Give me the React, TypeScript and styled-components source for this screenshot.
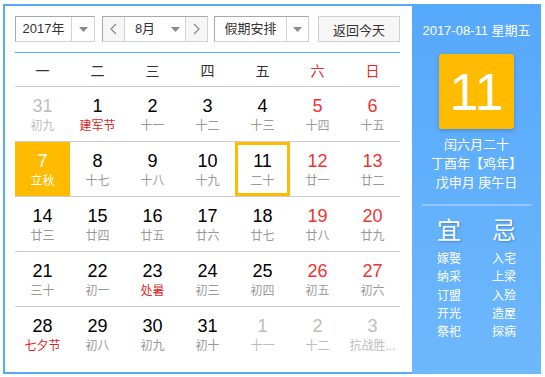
import React from "react";
import styled, { createGlobalStyle } from "styled-components";

type Day = {
  n: number;
  lunar: string;
  muted?: boolean;
  weekend?: boolean;
  festival?: boolean;
  selected?: boolean;
  today?: boolean;
};

const weekdays = ["一", "二", "三", "四", "五", "六", "日"];

const rows: Day[][] = [
  [
    { n: 31, lunar: "初九", muted: true },
    { n: 1, lunar: "建军节", festival: true },
    { n: 2, lunar: "十一" },
    { n: 3, lunar: "十二" },
    { n: 4, lunar: "十三" },
    { n: 5, lunar: "十四", weekend: true },
    { n: 6, lunar: "十五", weekend: true },
  ],
  [
    { n: 7, lunar: "立秋", selected: true },
    { n: 8, lunar: "十七" },
    { n: 9, lunar: "十八" },
    { n: 10, lunar: "十九" },
    { n: 11, lunar: "二十", today: true },
    { n: 12, lunar: "廿一", weekend: true },
    { n: 13, lunar: "廿二", weekend: true },
  ],
  [
    { n: 14, lunar: "廿三" },
    { n: 15, lunar: "廿四" },
    { n: 16, lunar: "廿五" },
    { n: 17, lunar: "廿六" },
    { n: 18, lunar: "廿七" },
    { n: 19, lunar: "廿八", weekend: true },
    { n: 20, lunar: "廿九", weekend: true },
  ],
  [
    { n: 21, lunar: "三十" },
    { n: 22, lunar: "初一" },
    { n: 23, lunar: "处暑", festival: true },
    { n: 24, lunar: "初三" },
    { n: 25, lunar: "初四" },
    { n: 26, lunar: "初五", weekend: true },
    { n: 27, lunar: "初六", weekend: true },
  ],
  [
    { n: 28, lunar: "七夕节", festival: true },
    { n: 29, lunar: "初八" },
    { n: 30, lunar: "初九" },
    { n: 31, lunar: "初十" },
    { n: 1, lunar: "十一", muted: true },
    { n: 2, lunar: "十二", muted: true },
    { n: 3, lunar: "抗战胜...", muted: true },
  ],
];

const yi = ["嫁娶", "纳采", "订盟", "开光", "祭祀"];
const ji = ["入宅", "上梁", "入殓", "造屋", "探病"];

const Caret = () => (
  <svg width="9" height="5" viewBox="0 0 9 5">
    <path d="M0 0 L9 0 L4.5 5 Z" fill="#8a8a8a" />
  </svg>
);

const Chevron = ({ dir }: { dir: "left" | "right" }) => (
  <svg width="7" height="12" viewBox="0 0 7 12">
    <polyline
      points={dir === "left" ? "6,1 1,6 6,11" : "1,1 6,6 1,11"}
      fill="none"
      stroke="#888"
      strokeWidth="1.2"
    />
  </svg>
);

const App: React.FC = () => {
  return (
    <>
      <GlobalStyle />
      <Page>
        <Calendar>
          <Main>
            <Toolbar>
              <Select $w={80}>
                <SelectText $w={55}>2017年</SelectText>
                <CaretBox $divider>
                  <Caret />
                </CaretBox>
              </Select>
              <Select $w={106} $gap={7}>
                <NavBtn>
                  <Chevron dir="left" />
                </NavBtn>
                <MonthBox>
                  <SelectText $w={40}>8月</SelectText>
                  <CaretBox>
                    <Caret />
                  </CaretBox>
                </MonthBox>
                <NavBtn $right>
                  <Chevron dir="right" />
                </NavBtn>
              </Select>
              <Select $w={95} $gap={6}>
                <SelectText $w={71}>假期安排</SelectText>
                <CaretBox $divider>
                  <Caret />
                </CaretBox>
              </Select>
              <TodayButton>返回今天</TodayButton>
            </Toolbar>
            <WeekHeader>
              {weekdays.map((w, i) => (
                <WeekDay key={w} $red={i >= 5}>
                  {w}
                </WeekDay>
              ))}
            </WeekHeader>
            <Grid>
              {rows.map((row, r) => (
                <Row key={r} $last={r === rows.length - 1}>
                  {row.map((d, i) => (
                    <Cell key={i} $selected={d.selected} $today={d.today}>
                      <Num
                        $muted={d.muted}
                        $red={d.weekend}
                        $white={d.selected}
                      >
                        {d.n}
                      </Num>
                      <Lunar
                        $muted={d.muted}
                        $red={d.festival}
                        $white={d.selected}
                      >
                        {d.lunar}
                      </Lunar>
                    </Cell>
                  ))}
                </Row>
              ))}
            </Grid>
          </Main>
          <Side>
            <DateLine>2017-08-11 星期五</DateLine>
            <BigDay>11</BigDay>
            <LunarInfo>
              <div>闰六月二十</div>
              <div>丁酉年【鸡年】</div>
              <div>戊申月 庚午日</div>
            </LunarInfo>
            <Divider />
            <Almanac>
              <AlmanacCol>
                <AlmanacTitle>宜</AlmanacTitle>
                {yi.map((t) => (
                  <AlmanacItem key={t}>{t}</AlmanacItem>
                ))}
              </AlmanacCol>
              <AlmanacCol>
                <AlmanacTitle>忌</AlmanacTitle>
                {ji.map((t) => (
                  <AlmanacItem key={t}>{t}</AlmanacItem>
                ))}
              </AlmanacCol>
            </Almanac>
          </Side>
        </Calendar>
      </Page>
    </>
  );
};

const GlobalStyle = createGlobalStyle`
  body {
    margin: 0;
    background: #fff;
    font-family: "Liberation Sans", "Noto Sans CJK SC", sans-serif;
  }
`;

const Page = styled.div`
  padding: 4px 0 0 3px;
`;

const Calendar = styled.div`
  display: flex;
  width: 538px;
  height: 370px;
  box-sizing: border-box;
  border: 2px solid #58a9fb;
  border-right: none;
  background: #fff;
`;

const Main = styled.div`
  width: 407px;
  box-sizing: border-box;
  padding: 10px 12px 0 10px;
`;

const Toolbar = styled.div`
  display: flex;
  height: 26px;
  padding-bottom: 10px;
  border-bottom: 1px solid #58a9fb;
`;

const Select = styled.div<{ $w: number; $gap?: number }>`
  display: flex;
  width: ${(p) => p.$w}px;
  height: 26px;
  margin-left: ${(p) => p.$gap || 0}px;
  box-sizing: border-box;
  border: 1px solid;
  border-color: #a8a8a8 #d2d2d2 #d2d2d2 #a8a8a8;
  background: #fff;
  color: #333;
  font-size: 13px;
`;

const SelectText = styled.div<{ $w: number }>`
  width: ${(p) => p.$w}px;
  display: flex;
  align-items: center;
  justify-content: center;
  line-height: 24px;
`;

const CaretBox = styled.div<{ $divider?: boolean }>`
  flex: 1;
  display: flex;
  align-items: center;
  justify-content: center;
  border-left: ${(p) => (p.$divider ? "1px solid #d2d2d2" : "none")};
`;

const MonthBox = styled.div`
  display: flex;
  width: 60px;
`;

const NavBtn = styled.div<{ $right?: boolean }>`
  flex: 1;
  display: flex;
  align-items: center;
  justify-content: center;
  background: #f6f6f6;
  border-left: ${(p) => (p.$right ? "1px solid #d2d2d2" : "none")};
  border-right: ${(p) => (p.$right ? "none" : "1px solid #d2d2d2")};
`;

const TodayButton = styled.div`
  width: 82px;
  height: 26px;
  margin-left: 9px;
  box-sizing: border-box;
  border: 1px solid #cfcfcf;
  background: #f7f7f7;
  color: #333;
  font-size: 13px;
  display: flex;
  align-items: center;
  justify-content: center;
`;

const WeekHeader = styled.div`
  display: grid;
  grid-template-columns: repeat(7, 55px);
  height: 33px;
  border-bottom: 1px solid #cccccc;
`;

const WeekDay = styled.div<{ $red?: boolean }>`
  display: flex;
  align-items: center;
  justify-content: center;
  font-size: 14px;
  color: ${(p) => (p.$red ? "#e62828" : "#333")};
`;

const Grid = styled.div`
  display: flex;
  flex-direction: column;
`;

const Row = styled.div<{ $last?: boolean }>`
  display: grid;
  grid-template-columns: repeat(7, 55px);
  height: 54px;
  border-bottom: ${(p) => (p.$last ? "none" : "1px solid #cccccc")};
`;

const Cell = styled.div<{ $selected?: boolean; $today?: boolean }>`
  display: flex;
  flex-direction: column;
  align-items: center;
  padding-top: 8px;
  box-sizing: border-box;
  background: ${(p) => (p.$selected ? "#ffbb00" : "transparent")};
  box-shadow: ${(p) => (p.$today ? "inset 0 0 0 3px #ffbb00" : "none")};
`;

const Num = styled.div<{ $muted?: boolean; $red?: boolean; $white?: boolean }>`
  font-size: 18px;
  line-height: 22px;
  color: ${(p) =>
    p.$white ? "#fff" : p.$muted ? "#bdbdbd" : p.$red ? "#ee3333" : "#000"};
`;

const Lunar = styled.div<{ $muted?: boolean; $red?: boolean; $white?: boolean }>`
  font-size: 12px;
  line-height: 18px;
  white-space: nowrap;
  color: ${(p) =>
    p.$white ? "#fff" : p.$muted ? "#bdbdbd" : p.$red ? "#e02424" : "#999"};
`;

const Side = styled.div`
  flex: 1;
  margin: -2px 0;
  display: flex;
  flex-direction: column;
  align-items: center;
  padding-top: 18px;
  background: linear-gradient(180deg, #56a8fb 0%, #6eb8fc 100%);
  color: #fff;
`;

const DateLine = styled.div`
  font-size: 13px;
  line-height: 18px;
`;

const BigDay = styled.div`
  margin-top: 14px;
  width: 75px;
  height: 75px;
  border-radius: 3px;
  background: #ffbb00;
  box-shadow: 0 2px 4px rgba(0, 60, 140, 0.25);
  display: flex;
  align-items: center;
  justify-content: center;
  font-size: 52px;
  color: #fff;
`;

const LunarInfo = styled.div`
  margin-top: 6px;
  font-size: 13px;
  line-height: 19px;
  text-align: center;
`;

const Divider = styled.div`
  margin-top: 12px;
  width: 110px;
  height: 2px;
  background: rgba(255, 255, 255, 0.3);
`;

const Almanac = styled.div`
  display: flex;
  gap: 5px;
  margin-top: 11px;
`;

const AlmanacCol = styled.div`
  width: 50px;
  display: flex;
  flex-direction: column;
  align-items: center;
`;

const AlmanacTitle = styled.div`
  font-size: 24px;
  line-height: 28px;
  margin-bottom: 5px;
  text-shadow: 1px 1px 2px rgba(0, 50, 120, 0.35);
`;

const AlmanacItem = styled.div`
  font-size: 12px;
  line-height: 18.3px;
`;

export default App;
